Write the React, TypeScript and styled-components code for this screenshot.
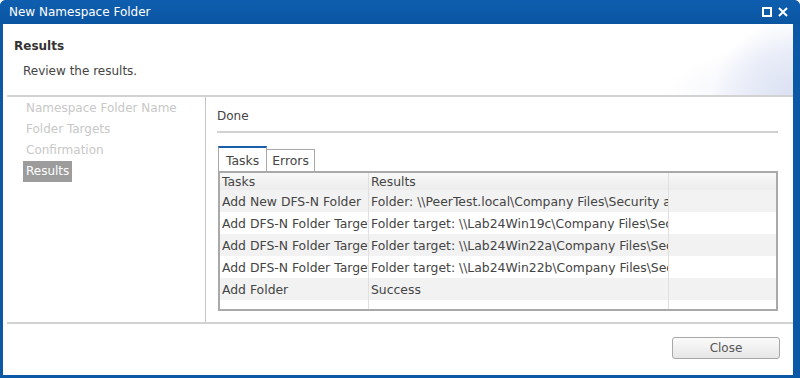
import React from 'react';
import styled, { createGlobalStyle } from 'styled-components';

const GlobalStyle = createGlobalStyle`
  html, body {
    margin: 0;
    padding: 0;
    background: #ffffff;
  }
  body {
    font-family: 'DejaVu Sans', Verdana, sans-serif;
    font-size: 11px;
    color: #444444;
  }
`;

const Window = styled.div`
  width: 800px;
  height: 378px;
  box-sizing: border-box;
  background: #0b58a6;
  border-radius: 6px 6px 0 0;
  display: flex;
  flex-direction: column;
  padding: 0 7px 3px 3px;
`;
const TitleBar = styled.div`
  height: 24px;
  flex: none;
  display: flex;
  align-items: center;
  justify-content: space-between;
  color: #ffffff;
  font-size: 12px;
  background: linear-gradient(#0f5eaf, #0a55a2);
  margin: 0 -7px 0 -3px;
  padding: 0 12px 0 9px;
  border-radius: 6px 6px 0 0;
`;
const TitleButtons = styled.div`
  display: flex;
  align-items: center;
  gap: 6px;
`;
const Body = styled.div`
  flex: 1;
  background: #ffffff;
  display: flex;
  flex-direction: column;
  min-height: 0;
`;
const Header = styled.div`
  flex: none;
  margin-left: 4px;
  border-bottom: 2px solid #d2d2d2;
  padding: 14px 0 0 7px;
  height: 57px;
  background:
    radial-gradient(ellipse 80px 75px at 100% 100%, #dbe1f3 0%, #e8ecf8 55%, rgba(255,255,255,0) 100%),
    radial-gradient(ellipse 130px 50px at 100% 100%, rgba(232,236,248,0.8) 0%, rgba(255,255,255,0) 100%);
`;
const HeaderTitle = styled.div`
  font-weight: bold;
  font-size: 12px;
  color: #333333;
  line-height: 16px;
`;
const HeaderText = styled.div`
  margin: 9px 0 0 9px;
  font-size: 12px;
  line-height: 16px;
  color: #444444;
`;
const Main = styled.div`
  height: 225px;
  flex: none;
  margin-left: 4px;
  display: flex;
  border-bottom: 2px solid #d2d2d2;
`;
const Nav = styled.div`
  width: 199px;
  flex: none;
  border-right: 1px solid #c4c4c4;
  padding: 1px 0 0 16px;
  box-sizing: border-box;
  display: flex;
  flex-direction: column;
  align-items: flex-start;
`;
const NavItem = styled.div<{ $active?: boolean }>`
  height: 21px;
  line-height: 21px;
  padding: 0 3px;
  font-size: 12px;
  color: ${(p) => (p.$active ? '#ffffff' : '#c8c8c8')};
  background: ${(p) => (p.$active ? '#9c9c9c' : 'transparent')};
`;
const Pane = styled.div`
  flex: 1;
  padding: 0 15px 0 11px;
  display: flex;
  flex-direction: column;
`;
const Status = styled.div`
  height: 32px;
  padding-top: 2px;
  line-height: 35px;
  font-size: 12px;
  border-bottom: 2px solid #d2d2d2;
`;
const Tabs = styled.div`
  display: flex;
  align-items: flex-end;
  margin: 13px 0 0 1px;
`;
const Tab = styled.div<{ $active?: boolean }>`
  height: ${(p) => (p.$active ? '23px' : '21px')};
  line-height: ${(p) => (p.$active ? '25px' : '22px')};
  padding: 0 ${(p) => (p.$active ? '7px' : '5px')};
  font-size: 12.4px;
  color: #444444;
  background: #ffffff;
  border: 1px solid #a8a8a8;
  border-bottom: none;
  border-top: ${(p) => (p.$active ? '2px solid #1b5fa8' : '1px solid #a8a8a8')};
  margin-left: ${(p) => (p.$active ? '0' : '-1px')};
`;
const Table = styled.div`
  margin-left: 1px;
  border: 2px solid #a9a9a9;
  height: 140px;
  box-sizing: border-box;
  overflow: hidden;
`;
const Row = styled.div<{ $shade?: boolean; $head?: boolean; $h?: number }>`
  display: grid;
  grid-template-columns: 149px 300px 1fr;
  height: ${(p) => p.$h ?? 22}px;
  line-height: ${(p) => (p.$h ?? 22) + 1}px;
  background: ${(p) =>
    p.$head
      ? 'linear-gradient(#f8f8f8, #ececec)'
      : p.$shade
      ? '#f2f2f2'
      : '#ffffff'};
`;
const Cell = styled.div`
  padding-left: 2px;
  white-space: nowrap;
  overflow: hidden;
  font-size: 12.4px;
  color: #444444;
  border-right: 1px solid #e0e0e0;
  &:last-child {
    border-right: none;
  }
`;
const Footer = styled.div`
  flex: 1;
  display: flex;
  justify-content: flex-end;
  align-items: flex-start;
  padding: 13px 13px 0 0;
`;
const Button = styled.button`
  width: 108px;
  height: 22px;
  font-family: inherit;
  font-size: 12px;
  color: #555555;
  border: 1px solid #a8a8a8;
  border-radius: 3px;
  background: linear-gradient(#fbfbfb, #e6e6e6);
  padding: 0;
`;

const rows = [
  ['Add New DFS-N Folder', 'Folder: \\\\PeerTest.local\\Company Files\\Security and Compliance'],
  ['Add DFS-N Folder Target', 'Folder target: \\\\Lab24Win19c\\Company Files\\Security'],
  ['Add DFS-N Folder Target', 'Folder target: \\\\Lab24Win22a\\Company Files\\Security'],
  ['Add DFS-N Folder Target', 'Folder target: \\\\Lab24Win22b\\Company Files\\Security'],
  ['Add Folder', 'Success'],
];

const App = () => {
  return (
    <>
      <GlobalStyle />
      <Window>
        <TitleBar>
          <span>New Namespace Folder</span>
          <TitleButtons>
            <svg width="10" height="10" viewBox="0 0 10 10">
              <rect x="1" y="1" width="8" height="8" fill="none" stroke="#fff" strokeWidth="2" />
            </svg>
            <svg width="10" height="10" viewBox="0 0 10 10">
              <path d="M1 1 L9 9 M9 1 L1 9" stroke="#fff" strokeWidth="2" />
            </svg>
          </TitleButtons>
        </TitleBar>
        <Body>
          <Header>
            <HeaderTitle>Results</HeaderTitle>
            <HeaderText>Review the results.</HeaderText>
          </Header>
          <Main>
            <Nav>
              <NavItem>Namespace Folder Name</NavItem>
              <NavItem>Folder Targets</NavItem>
              <NavItem>Confirmation</NavItem>
              <NavItem $active>Results</NavItem>
            </Nav>
            <Pane>
              <Status>Done</Status>
              <Tabs>
                <Tab $active>Tasks</Tab>
                <Tab>Errors</Tab>
              </Tabs>
              <Table>
                <Row $head $h={17}>
                  <Cell>Tasks</Cell>
                  <Cell>Results</Cell>
                  <Cell />
                </Row>
                {rows.map((r, i) => (
                  <Row key={i} $shade={i % 2 === 0}>
                    <Cell>{r[0]}</Cell>
                    <Cell>{r[1]}</Cell>
                    <Cell />
                  </Row>
                ))}
                <Row>
                  <Cell />
                  <Cell />
                  <Cell />
                </Row>
              </Table>
            </Pane>
          </Main>
          <Footer>
            <Button>Close</Button>
          </Footer>
        </Body>
      </Window>
    </>
  );
};

export default App;
